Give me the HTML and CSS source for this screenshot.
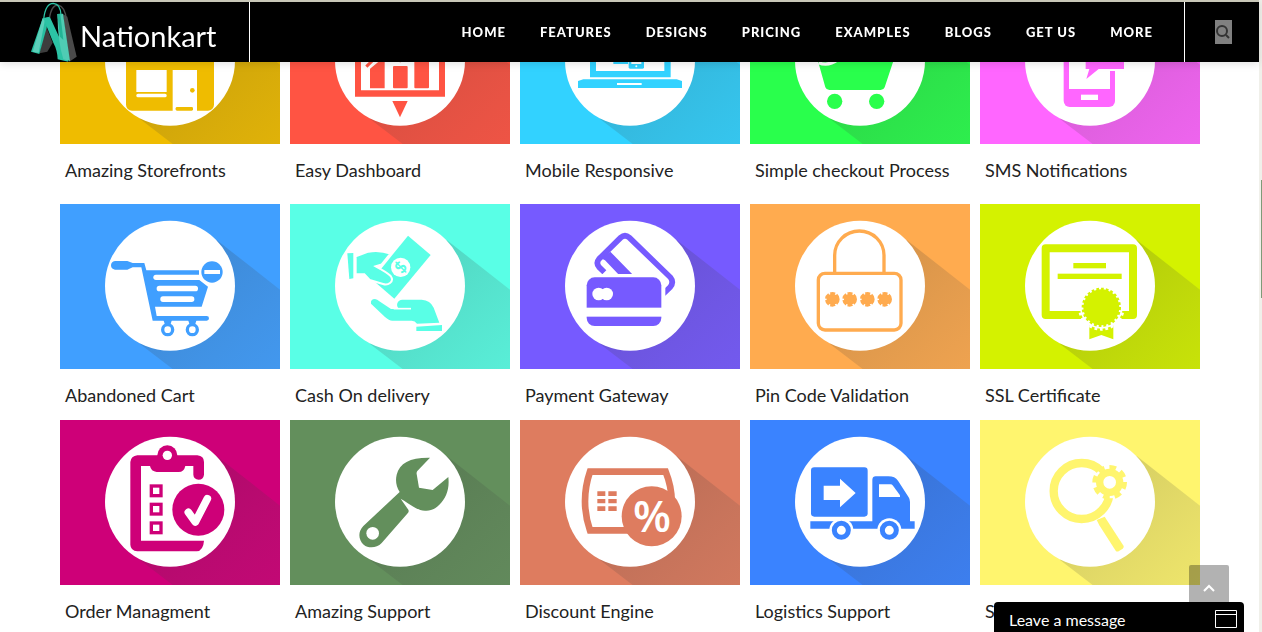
FILE: index.html
```html
<!DOCTYPE html>
<html lang="en">
<head>
  <meta charset="UTF-8" />
  <meta name="viewport" content="width=device-width, initial-scale=1.0"/>
  <title>Nationkart - Features</title>
  <link rel="stylesheet" href="styles.css">
</head>
<body>
  <!-- shared tile backdrop: long shadow + white disc -->
  <svg class="defs" width="0" height="0" aria-hidden="true">
    <defs>
      <linearGradient id="fade" x1="0" y1="0" x2="1" y2="1">
        <stop offset="0.3" stop-color="#333" stop-opacity="0.19"/>
        <stop offset="1" stop-color="#555" stop-opacity="0.1"/>
      </linearGradient>
      <symbol id="disc" viewBox="0 0 660 495">
        <path d="M470 108L660 257V495H338L240 420Z" fill="url(#fade)"/>
        <circle cx="330" cy="245" r="195" fill="#fff"/>
      </symbol>
    </defs>
  </svg>

  <header class="header">
    <a class="brand" href="#">
      <svg class="brand-mark" viewBox="90 6 144 180" aria-hidden="true">
        <path d="M148 56Q154 15 174 15Q196 20 199 60" fill="none" stroke="#4a4a4a" stroke-width="4"/>
        <path d="M188 42L202 50L230 170L208 185Z" fill="#4a4a4a"/>
        <path d="M138 78L158 128L142 155L118 160Z" fill="#3d3d3d"/>
        <path d="M128 55L148 50L138 90L118 162L93 155Z" fill="#27bfa0"/>
        <path d="M128 55L136 54L116 158L98 155Z" fill="#5cd0ba"/>
        <path d="M130 55L150 52L186 130L205 185L173 178Q172 150 160 128Z" fill="#2cc3a5"/>
        <path d="M172 42L189 41L210 183L190 178Q174 130 172 42Z" fill="#4fccb4"/>
        <path d="M172 42L181 41L190 120L180 110Z" fill="#22b495"/>
        <path d="M131 58Q136 10 160 10Q182 12 183 46" fill="none" stroke="#2cc3a5" stroke-width="4"/>
      </svg>
      <span class="brand-name">Nationkart</span>
    </a>
    <nav class="nav">
      <a href="#">HOME</a>
      <a href="#">FEATURES</a>
      <a href="#">DESIGNS</a>
      <a href="#">PRICING</a>
      <a href="#">EXAMPLES</a>
      <a href="#">BLOGS</a>
      <a href="#">GET US</a>
      <a href="#">MORE</a>
    </nav>
    <div class="search">
      <button class="search-btn" type="button" aria-label="Search">
        <svg viewBox="0 0 14 14" width="14" height="14" fill="none" stroke="#333" stroke-width="2">
          <circle cx="6" cy="6" r="5"/><path d="M10 10L13 13"/>
        </svg>
      </button>
    </div>
  </header>

  <main class="features">
    <div class="row row-first">
      <a class="feature" href="#">
        <svg class="tile gold" viewBox="0 0 660 495" aria-hidden="true">
          <use href="#disc"/>
          <g transform="translate(-180 63)" fill="currentColor">
            <path d="M390 50H630L660 130H360Z"/>
            <rect x="378" y="110" width="264" height="222" rx="18"/>
            <g fill="#fff">
              <rect x="409" y="210" width="91" height="66"/>
              <rect x="409" y="281" width="91" height="11" rx="5"/>
              <rect x="518" y="210" width="73" height="124"/>
            </g>
            <circle cx="577" cy="271" r="7"/>
            <rect x="527" y="321" width="52" height="11" rx="4"/>
          </g>
        </svg>
        <span class="caption">Amazing Storefronts</span>
      </a>
      <a class="feature" href="#">
        <svg class="tile red" viewBox="0 0 660 495" aria-hidden="true">
          <use href="#disc"/>
          <g transform="translate(-870 63)" fill="currentColor">
            <path d="M1065 60H1335V290H1065ZM1083 78V271H1317V78Z" fill-rule="evenodd"/>
            <path d="M1110 206L1154 170V265H1110Z"/>
            <rect x="1179" y="198" width="44" height="67" rx="3"/>
            <rect x="1243" y="150" width="44" height="115" rx="3"/>
            <path d="M1099 202L1150 150L1200 185L1260 120" fill="none" stroke="#fff" stroke-width="20"/>
            <path d="M1099 200L1150 150L1200 182L1260 120" fill="none" stroke="currentColor" stroke-width="9"/>
            <path d="M1177 303H1223L1200 352Z"/>
          </g>
        </svg>
        <span class="caption">Easy Dashboard</span>
      </a>
      <a class="feature" href="#">
        <svg class="tile sky" viewBox="0 0 660 495" aria-hidden="true">
          <use href="#disc"/>
          <g transform="translate(-300 63)" fill="currentColor">
            <path d="M510 70H752V232H510ZM528 88V213H733V88Z" fill-rule="evenodd"/>
            <path d="M490 238H770L786 243V264H474V243Z"/>
            <rect x="591" y="249" width="74" height="6" fill="#fff"/>
            <rect x="580" y="110" width="80" height="70"/>
            <rect x="580" y="184" width="44" height="8"/>
            <rect x="626" y="140" width="46" height="66" rx="4"/>
            <rect x="634" y="150" width="30" height="42" fill="#fff"/>
            <circle cx="649" cy="199" r="3" fill="#fff"/>
          </g>
        </svg>
        <span class="caption">Mobile Responsive</span>
      </a>
      <a class="feature" href="#">
        <svg class="tile green" viewBox="0 0 660 495" aria-hidden="true">
          <use href="#disc"/>
          <g transform="translate(-990 63)" fill="currentColor">
            <path d="M1150 80H1180L1196 120H1441L1394 262Q1391 270 1382 270H1228Q1219 270 1216 262L1170 98H1150Z"/>
            <path d="M1196 188Q1225 200 1254 178" fill="none" stroke="#fff" stroke-width="10"/>
            <circle cx="1244" cy="304" r="23"/>
            <circle cx="1370" cy="304" r="23"/>
          </g>
        </svg>
        <span class="caption">Simple checkout Process</span>
      </a>
      <a class="feature" href="#">
        <svg class="tile pink" viewBox="0 0 660 495" aria-hidden="true">
          <use href="#disc"/>
          <g transform="translate(-414 63)" fill="currentColor">
            <rect x="665" y="50" width="154" height="271" rx="18"/>
            <rect x="681" y="90" width="123" height="177" fill="#fff"/>
            <rect x="800" y="80" width="24" height="133" fill="#fff"/>
            <rect x="717" y="284" width="51" height="16" fill="#fff"/>
            <path d="M731 100H846V207H770L733 237L742 207H731Z"/>
          </g>
        </svg>
        <span class="caption">SMS Notifications</span>
      </a>
    </div>

    <div class="row">
      <a class="feature" href="#">
        <svg class="tile blue" viewBox="0 0 660 495" aria-hidden="true">
          <use href="#disc"/>
          <g transform="translate(-30 -27)" fill="currentColor">
            <path d="M195 198H232L248 204H283L289 226H447V254L474 275L455 335H315L320 363H470Q477 363 477 370Q477 377 470 377H308L274 217H248L232 224H195Q183 222 183 211Q183 200 195 198Z"/>
            <g fill="#fff">
              <rect x="310" y="239" width="150" height="16" rx="8"/>
              <rect x="320" y="272" width="124" height="17" rx="8"/>
              <rect x="331" y="304" width="102" height="17" rx="8"/>
              <circle cx="486" cy="231" r="39"/>
            </g>
            <circle cx="486" cy="231" r="32"/>
            <rect x="463" y="225" width="47" height="12" fill="#fff"/>
            <path d="M340 374H366L360 392H346ZM414 374H440L434 392H420Z"/>
            <circle cx="353" cy="404" r="15" fill="#fff" stroke="currentColor" stroke-width="10"/>
            <circle cx="427" cy="404" r="15" fill="#fff" stroke="currentColor" stroke-width="10"/>
          </g>
        </svg>
        <span class="caption">Abandoned Cart</span>
      </a>
      <a class="feature" href="#">
        <svg class="tile aqua" viewBox="0 0 660 495" aria-hidden="true">
          <use href="#disc"/>
          <g transform="translate(-15 -27)" fill="currentColor">
            <path d="M369 122L437 180L328 311L262 254Z"/>
            <circle cx="347" cy="217" r="29" fill="#fff"/>
            <text class="dollar" x="347" y="234" transform="rotate(-50 347 217)">$</text>
            <path d="M187 175L205 174V250L193 252Z"/>
            <path d="M212 184L250 170Q285 164 316 176L290 208L272 214Q306 232 317 243Q326 256 315 264Q306 271 294 267L254 255L238 238L212 238Z" stroke="#fff" stroke-width="6"/>
            <path d="M258 326Q256 312 270 312Q277 313 283 319L318 342H342Q334 334 337 325Q341 314 352 314H410Q436 315 446 338L463 383L396 386Q390 377 380 377H322Q312 377 300 366Z"/>
            <path d="M326 341H378" stroke="#fff" stroke-width="5"/>
            <path d="M394 395L471 390V408H394Z"/>
          </g>
        </svg>
        <span class="caption">Cash On delivery</span>
      </a>
      <a class="feature" href="#">
        <svg class="tile violet" viewBox="0 0 660 495" aria-hidden="true">
          <use href="#disc"/>
          <g transform="translate(-15 -27)" fill="currentColor">
            <path d="M268 232L252 216Q242 204 252 192L317 128Q330 116 343 128L466 247Q478 262 465 277L445 296" fill="none" stroke="currentColor" stroke-width="17"/>
            <path d="M258 190L286 170L352 238H310L270 196Z"/>
            <path d="M262 202L296 238" stroke="#fff" stroke-width="12"/>
            <rect x="208" y="237" width="243" height="165" rx="24" fill="#fff"/>
            <rect x="215" y="247" width="224" height="146" rx="24"/>
            <g fill="#fff">
              <rect x="210" y="338" width="234" height="27"/>
              <circle cx="251" cy="297" r="19"/>
              <circle cx="275" cy="297" r="19"/>
            </g>
          </g>
        </svg>
        <span class="caption">Payment Gateway</span>
      </a>
      <a class="feature" href="#">
        <svg class="tile orange" viewBox="0 0 660 495" aria-hidden="true">
          <use href="#disc"/>
          <g transform="translate(-15 -27)" fill="none" stroke="currentColor" stroke-width="10">
            <rect x="220" y="235" width="248" height="170" rx="20"/>
            <path d="M269 235V181A74 73 0 0 1 417 181V235"/>
            <g fill="currentColor" stroke-dasharray="14 4">
              <circle cx="262" cy="313" r="17"/>
              <circle cx="314" cy="313" r="17"/>
              <circle cx="367" cy="313" r="17"/>
              <circle cx="419" cy="313" r="17"/>
            </g>
          </g>
        </svg>
        <span class="caption">Pin Code Validation</span>
      </a>
      <a class="feature" href="#">
        <svg class="tile lime" viewBox="0 0 660 495" aria-hidden="true">
          <use href="#disc"/>
          <g transform="translate(-15 -27)" fill="currentColor">
            <rect x="212" y="160" width="262" height="200" fill="none" stroke="currentColor" stroke-width="24" stroke-linejoin="round"/>
            <rect x="295" y="204" width="98" height="16"/>
            <rect x="248" y="236" width="192" height="16"/>
            <path d="M343 392H415V433L379 420L343 433Z"/>
            <circle cx="379" cy="337" r="64" fill="#fff" stroke="#fff" stroke-width="12" stroke-dasharray="8 8"/>
            <circle cx="379" cy="337" r="54" stroke="currentColor" stroke-width="10" stroke-dasharray="8 6"/>
          </g>
        </svg>
        <span class="caption">SSL Certificate</span>
      </a>
    </div>

    <div class="row">
      <a class="feature" href="#">
        <svg class="tile magenta" viewBox="0 0 660 495" aria-hidden="true">
          <use href="#disc"/>
          <g transform="translate(-30 -24)" fill="currentColor">
            <path d="M262 130H442Q462 132 462 150V188Q460 203 446 203Q431 202 430 188V162H406Q402 180 386 180H320Q303 178 300 162H273V386H462Q460 416 440 418H262Q242 416 241 398V150Q243 132 262 130Z"/>
            <circle cx="352" cy="130" r="30"/>
            <circle cx="352" cy="130" r="14" fill="#fff"/>
            <g fill="none" stroke="currentColor" stroke-width="10">
              <rect x="304" y="222" width="29" height="29"/>
              <rect x="304" y="277" width="29" height="29"/>
              <rect x="304" y="333" width="29" height="29"/>
            </g>
            <circle cx="445" cy="293" r="78"/>
            <path d="M415 301L436 330L472 260" fill="none" stroke="#fff" stroke-width="23" stroke-linecap="round" stroke-linejoin="round"/>
          </g>
        </svg>
        <span class="caption">Order Managment</span>
      </a>
      <a class="feature" href="#">
        <svg class="tile moss" viewBox="0 0 660 495" aria-hidden="true">
          <use href="#disc"/>
          <g transform="translate(-15 -24)" fill="currentColor">
            <path d="M344 240C333 224 331 205 335 188C344 152 376 136 435 137L397 177Q394 181 395 186L402 227L443 234L490 195C494 230 484 258 463 278C447 293 436 297 420 296C398 295 390 286 347 260L370 293Q373 299 368 304L290 393C275 409 250 410 236 398C220 384 218 359 235 342Z"/>
            <circle cx="263" cy="364" r="19" fill="#fff"/>
          </g>
        </svg>
        <span class="caption">Amazing Support</span>
      </a>
      <a class="feature" href="#">
        <svg class="tile coral" viewBox="0 0 660 495" aria-hidden="true">
          <use href="#disc"/>
          <g transform="translate(-15 -24)" fill="currentColor">
            <path d="M225 179H452Q488 268 452 355H225Q195 268 225 179Z" fill="none" stroke="currentColor" stroke-width="20"/>
            <path d="M247 238H271V252H247ZM280 238H305V252H280ZM247 261H271V274H247ZM280 261H305V274H280ZM247 283H271V297H247ZM280 283H305V297H280Z"/>
            <circle cx="410" cy="313" r="90"/>
            <text class="percent" x="411" y="361">%</text>
          </g>
        </svg>
        <span class="caption">Discount Engine</span>
      </a>
      <a class="feature" href="#">
        <svg class="tile royal" viewBox="0 0 660 495" aria-hidden="true">
          <use href="#disc"/>
          <g transform="translate(-705 -24)" fill="currentColor">
            <rect x="888" y="166" width="170" height="148" rx="10"/>
            <path d="M926 221H975V200L1022 243L975 286V264H926Z" fill="#fff"/>
            <path d="M886 328H1072V203Q1073 193 1082 193H1120Q1140 193 1149 206L1181 256Q1185 262 1185 270V328H1199V350H886Z"/>
            <path d="M1092 217H1126Q1131 217 1134 221L1155 250V255H1092Z" fill="#fff"/>
            <circle cx="979" cy="355" r="36" fill="#fff"/>
            <circle cx="1123" cy="355" r="36" fill="#fff"/>
            <circle cx="979" cy="355" r="21" fill="#fff" stroke="currentColor" stroke-width="15"/>
            <circle cx="1123" cy="355" r="21" fill="#fff" stroke="currentColor" stroke-width="15"/>
          </g>
        </svg>
        <span class="caption">Logistics Support</span>
      </a>
      <a class="feature" href="#">
        <svg class="tile lemon" viewBox="0 0 660 495" aria-hidden="true">
          <use href="#disc"/>
          <g transform="translate(-30 -24)" fill="currentColor">
            <circle cx="335" cy="237" r="84" fill="none" stroke="currentColor" stroke-width="25"/>
            <path d="M380 324L404 314L461 402Q462 407 458 410L446 418Q440 420 437 416L388 340Z"/>
            <circle cx="419" cy="211" r="44" fill="#fff" stroke="#fff" stroke-width="8"/>
            <circle cx="419" cy="211" r="30" fill="#fff" stroke="currentColor" stroke-width="22"/>
            <circle cx="419" cy="211" r="45" fill="none" stroke="currentColor" stroke-width="14" stroke-dasharray="20 15"/>
          </g>
        </svg>
        <span class="caption">S</span>
      </a>
    </div>
  </main>

  <button class="to-top" type="button" aria-label="Back to top">
    <svg viewBox="0 0 12 8" width="12" height="8" fill="none" stroke="#fff" stroke-width="2"><path d="M1 7L6 2L11 7"/></svg>
  </button>
  <button class="chat" type="button">
    <span>Leave a message</span>
    <svg viewBox="0 0 22 18" width="22" height="18" fill="none" stroke="#fff"><path d="M0.5 0.5H21.5V17.5H0.5ZM0 4.5H22"/></svg>
  </button>
  <div class="scroll-track"><div class="scroll-thumb"></div></div>
</body>
</html>
```
FILE: styles.css
```css
html, body {
  margin: 0;
  padding: 0;
  height: 100vh;
  overflow: hidden;
  background: #fff;
  font-family: Lato, "Liberation Sans", sans-serif;
}

a {
  color: inherit;
  text-decoration: none;
}

button {
  border: 0;
  padding: 0;
  font: inherit;
  cursor: pointer;
}

.defs {
  position: absolute;
}

/* header */
.header {
  position: fixed;
  top: 0;
  left: 0;
  right: 3px;
  height: 60px;
  z-index: 10;
  display: flex;
  background: #000;
  border-top: 2px solid #c9c7b8;
  box-shadow: 0 2px 8px rgba(0,0,0,0.12);
  color: #fff;
}

.brand {
  display: flex;
  align-items: center;
  gap: 2px;
  padding: 0 32px 0 30px;
  border-right: 1px solid #fff;
}

.brand-mark {
  width: 48px;
  height: 60px;
}

.brand-name {
  font-size: 29px;
  font-weight: 400;
  line-height: 60px;
  padding-top: 8px;
}

.nav {
  flex: 1;
  display: flex;
  justify-content: flex-end;
  align-items: center;
  padding-right: 14px;
}

.nav a {
  padding: 0 17px;
  font-size: 13px;
  font-weight: 900;
  letter-spacing: 1px;
  white-space: nowrap;
}

.search {
  width: 72px;
  padding-left: 2px;
  border-left: 1px solid #fff;
  display: flex;
  justify-content: center;
  align-items: center;
}

.search-btn {
  width: 17px;
  height: 24px;
  background: #808080;
  display: flex;
  justify-content: center;
  align-items: center;
}

/* feature tiles, page is scrolled so the first row runs under the header */
.features {
  max-width: 1140px;
  margin: -21px auto 0;
  padding-right: 2px;
}

.row {
  display: grid;
  grid-template-columns: repeat(5, 1fr);
  gap: 10px;
}

.row-first {
  margin-bottom: 9px;
}

.tile {
  display: block;
  width: 100%;
  background: currentColor;
}

.caption {
  display: block;
  padding: 3px 0 2px 5px;
  font-size: 18px;
  line-height: 46px;
  color: #222;
  white-space: nowrap;
}

.dollar {
  font-size: 48px;
  font-weight: 900;
  text-anchor: middle;
}

.percent {
  font-family: "Open Sans", sans-serif;
  font-size: 132px;
  font-weight: 600;
  text-anchor: middle;
  fill: #fff;
}

.gold { color: #efbc00; }
.red { color: #ff5443; }
.sky { color: #32d2ff; }
.green { color: #29ff4c; }
.pink { color: #ff66ff; }
.blue { color: #409fff; }
.aqua { color: #59ffe6; }
.violet { color: #765aff; }
.orange { color: #ffab4f; }
.lime { color: #d4f200; }
.magenta { color: #ce0078; }
.moss { color: #638f5c; }
.coral { color: #de7c5f; }
.royal { color: #3a83ff; }
.lemon { color: #fff56e; }

/* floating widgets */
.to-top {
  position: fixed;
  right: 33px;
  bottom: 27px;
  width: 40px;
  height: 40px;
  border-radius: 2px;
  background: rgba(0,0,0,0.3);
  z-index: 11;
}

.chat {
  position: fixed;
  right: 18px;
  bottom: 0;
  width: 250px;
  height: 30px;
  padding: 4px 7px 0 15px;
  display: flex;
  justify-content: space-between;
  align-items: center;
  background: #000;
  border-radius: 4px 4px 0 0;
  color: #fff;
  font-size: 16px;
  z-index: 12;
}

.scroll-track {
  position: fixed;
  top: 0;
  right: 0;
  bottom: 0;
  width: 3px;
  box-sizing: border-box;
  padding: 180px 0 0 2px;
  background: #f0f0ea;
}

.scroll-thumb {
  height: 118px;
  background: #7f9a78;
}
```
